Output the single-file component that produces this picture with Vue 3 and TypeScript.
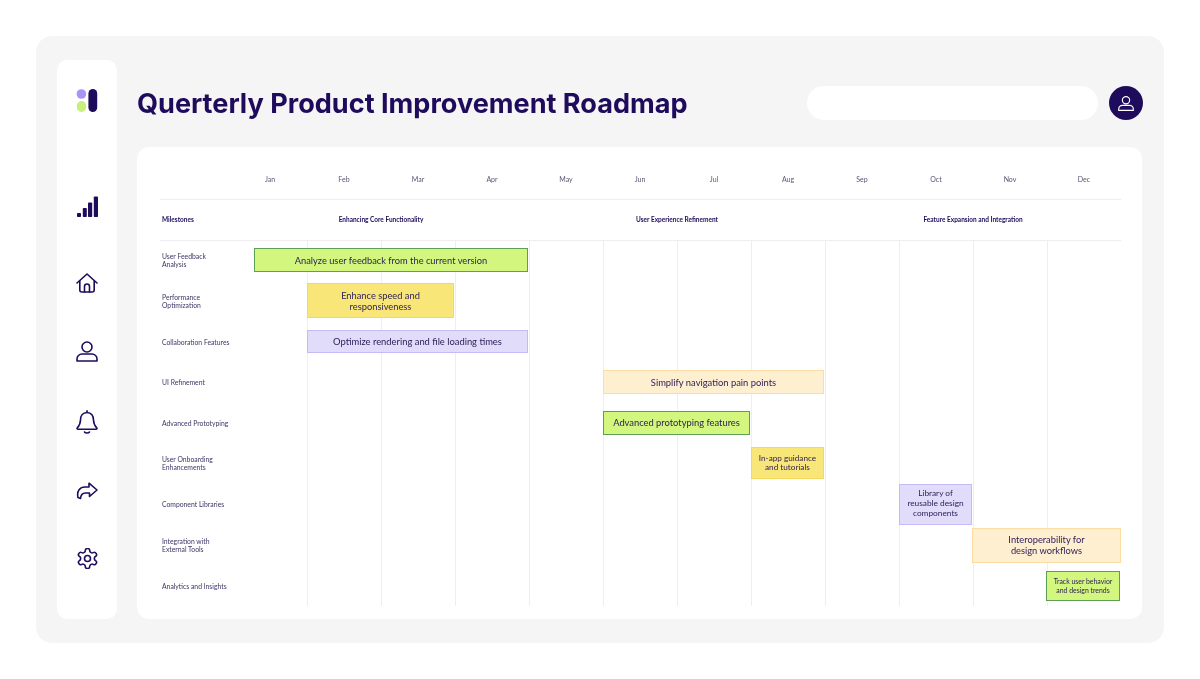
<script setup lang="ts">
interface Bar {
  text: string;
  start: number;
  span: number;
  row: number;
  tone: string;
  height: number;
  size: number;
  inset?: number;
  trim?: number;
}

const months = ['Jan', 'Feb', 'Mar', 'Apr', 'May', 'Jun', 'Jul', 'Aug', 'Sep', 'Oct', 'Nov', 'Dec'];

const phases = ['Enhancing Core Functionality', 'User Experience Refinement', 'Feature Expansion and Integration'];

const milestones = [
  'User Feedback\nAnalysis',
  'Performance\nOptimization',
  'Collaboration Features',
  'UI Refinement',
  'Advanced Prototyping',
  'User Onboarding\nEnhancements',
  'Component Libraries',
  'Integration with\nExternal Tools',
  'Analytics and Insights',
];

const bars: Bar[] = [
  { text: 'Analyze user feedback from the current version', start: 1, span: 4, row: 1, tone: 'green', height: 24, size: 9.3, inset: 21 },
  { text: 'Enhance speed and\nresponsiveness', start: 2, span: 2, row: 2, tone: 'yellow', height: 35, size: 9.3 },
  { text: 'Optimize rendering and file loading times', start: 2, span: 3, row: 3, tone: 'purple', height: 23, size: 9.4 },
  { text: 'Simplify navigation pain points', start: 6, span: 3, row: 4, tone: 'orange', height: 24, size: 9.4 },
  { text: 'Advanced prototyping features', start: 6, span: 2, row: 5, tone: 'green', height: 24, size: 9.35 },
  { text: 'In-app guidance\nand tutorials', start: 8, span: 1, row: 6, tone: 'yellow', height: 32, size: 8.2 },
  { text: 'Library of\nreusable design\ncomponents', start: 10, span: 1, row: 7, tone: 'purple', height: 41, size: 8.3 },
  { text: 'Interoperability for\ndesign workflows', start: 11, span: 2, row: 8, tone: 'orange', height: 35, size: 9.3, inset: -1, trim: 0 },
  { text: 'Track user behavior\nand design trends', start: 12, span: 1, row: 9, tone: 'green', height: 30, size: 6.9, inset: -1 },
];

function barStyle(bar: Bar) {
  return {
    gridColumn: `${bar.start + 1} / span ${bar.span}`,
    gridRow: bar.row,
    height: `${bar.height}px`,
    fontSize: `${bar.size}px`,
    marginLeft: bar.inset ? `${bar.inset}px` : undefined,
    marginRight: `${bar.trim ?? 1}px`,
  };
}
</script>

<template>
  <div class="shell">
    <aside class="sidebar">
      <svg class="logo" width="22" height="23" viewBox="0 0 22 23">
        <circle cx="5.4" cy="5" r="4.8" fill="#a795f5" />
        <rect x="0.8" y="12" width="9.4" height="11" rx="4.7" fill="#c8ee80" />
        <rect x="12.4" y="0" width="8.8" height="23" rx="4.4" fill="#1e0b5b" />
      </svg>

      <nav class="nav">
        <svg width="21" height="21" viewBox="0 0 21 21" fill="#1e0b5b">
          <rect x="0" y="17" width="4" height="4" rx="0.8" />
          <rect x="5.8" y="12" width="4" height="9" rx="0.8" />
          <rect x="11" y="6.5" width="4.2" height="14.5" rx="0.8" />
          <rect x="16.8" y="0.5" width="4.2" height="20.5" rx="0.8" />
        </svg>
        <svg class="home" width="22" height="20" viewBox="0 0 22 20">
          <path d="M1 10 L11 1 L21 10" />
          <path d="M3.8 8 V17 a2 2 0 0 0 2 2 H16.2 a2 2 0 0 0 2-2 V8" />
          <path d="M8.5 19 V13.5 a2.5 2.5 0 0 1 5 0 V19" />
        </svg>
        <svg width="22" height="21" viewBox="0 0 22 21">
          <circle cx="11" cy="6" r="5" />
          <path d="M1 20 v-2 a5 5 0 0 1 5-5 h10 a5 5 0 0 1 5 5 v2 z" />
        </svg>
        <svg width="22" height="24" viewBox="0 0 22 24">
          <path d="M11 0.8 V2.5" />
          <path d="M11 2.5 C6.5 2.5 4.5 6 4.5 10 C4.5 14 3 16 1.2 18 C0.8 18.6 1.2 19.2 2 19.2 H20 C20.8 19.2 21.2 18.6 20.8 18 C19 16 17.5 14 17.5 10 C17.5 6 15.5 2.5 11 2.5 Z" />
          <path d="M8.5 22 C9.5 23.3 12.5 23.3 13.5 22" />
        </svg>
        <svg width="22" height="18" viewBox="0 0 22 18">
          <path d="M13 1.2 L21 8 L13.5 14.5 V11 H9.5 C6.5 11 4.8 13 4.5 16.5 L2 15.5 C0.5 9 4 5 9 5 H13 Z" />
        </svg>
        <svg width="21" height="21" viewBox="2.5 1.5 19 21">
          <path d="M12.22 2h-.44a2 2 0 0 0-2 2v.18a2 2 0 0 1-1 1.73l-.43.25a2 2 0 0 1-2 0l-.15-.08a2 2 0 0 0-2.73.73l-.22.38a2 2 0 0 0 .73 2.73l.15.1a2 2 0 0 1 1 1.72v.51a2 2 0 0 1-1 1.74l-.15.09a2 2 0 0 0-.73 2.73l.22.38a2 2 0 0 0 2.73.73l.15-.08a2 2 0 0 1 2 0l.43.25a2 2 0 0 1 1 1.73V20a2 2 0 0 0 2 2h.44a2 2 0 0 0 2-2v-.18a2 2 0 0 1 1-1.73l.43-.25a2 2 0 0 1 2 0l.15.08a2 2 0 0 0 2.73-.73l.22-.39a2 2 0 0 0-.73-2.73l-.15-.08a2 2 0 0 1-1-1.74v-.5a2 2 0 0 1 1-1.74l.15-.09a2 2 0 0 0 .73-2.73l-.22-.38a2 2 0 0 0-2.73-.73l-.15.08a2 2 0 0 1-2 0l-.43-.25a2 2 0 0 1-1-1.73V4a2 2 0 0 0-2-2z" />
          <circle cx="12" cy="12" r="3" />
        </svg>
      </nav>
    </aside>

    <main class="main">
      <header class="topbar">
        <h1 class="title">Querterly Product Improvement Roadmap</h1>
        <div class="search"></div>
        <div class="avatar">
          <svg width="16" height="17" viewBox="0 0 22 21">
            <circle cx="11" cy="6" r="5" />
            <path d="M1 20 v-2 a5 5 0 0 1 5-5 h10 a5 5 0 0 1 5 5 v2 z" />
          </svg>
        </div>
      </header>

      <section class="card">
        <div class="months grid">
          <span></span>
          <span v-for="month in months" :key="month" class="month">{{ month }}</span>
        </div>

        <div class="phases grid">
          <span class="phase-label">Milestones</span>
          <span v-for="phase in phases" :key="phase" class="phase">{{ phase }}</span>
        </div>

        <div class="gantt grid">
          <div
            v-for="n in 11"
            :key="n"
            class="line"
            :style="{ gridColumn: n + 2 }"
          ></div>
          <div
            v-for="(label, i) in milestones"
            :key="label"
            class="label"
            :style="{ gridRow: i + 1 }"
          >{{ label }}</div>
          <div
            v-for="bar in bars"
            :key="bar.text"
            class="bar"
            :class="`bar--${bar.tone}`"
            :style="barStyle(bar)"
          >{{ bar.text }}</div>
        </div>
      </section>
    </main>
  </div>
</template>

<style>
body {
  background: #fff;
}
</style>

<style scoped>
.shell {
  display: flex;
  gap: 20px;
  width: 1128px;
  height: 607px;
  margin: 36px;
  padding: 24px 22px 24px 21px;
  box-sizing: border-box;
  background: #f5f5f6;
  border-radius: 16px;
  color: #1e0b5b;
  font-family: "Lato", "Noto Sans", sans-serif;
  will-change: transform;
}

.sidebar {
  flex: 0 0 60px;
  display: flex;
  flex-direction: column;
  align-items: center;
  padding-top: 29px;
  background: #fff;
  border-radius: 10px;
}

.nav {
  display: flex;
  flex-direction: column;
  align-items: center;
  gap: 48px;
  margin-top: 84px;
}

.nav svg,
.avatar svg {
  fill: none;
  stroke-linecap: round;
  stroke-linejoin: round;
}

.nav svg:first-child {
  fill: #1e0b5b;
}

.nav path,
.nav circle {
  stroke: #1e0b5b;
  stroke-width: 1.6;
}

.nav .home {
  margin-top: 8px;
}

.main {
  flex: 1;
  display: flex;
  flex-direction: column;
  min-width: 0;
}

.topbar {
  flex: 0 0 87px;
  display: flex;
  align-items: center;
  box-sizing: border-box;
  padding-bottom: 1px;
  margin-right: -1px;
}

.title {
  flex: 1;
  margin: 0;
  font-family: "Inter", sans-serif;
  font-size: 27.1px;
  font-weight: 700;
  white-space: nowrap;
}

.search {
  width: 291px;
  height: 34px;
  background: #fff;
  border-radius: 17px;
}

.avatar {
  display: flex;
  align-items: center;
  justify-content: center;
  width: 34px;
  height: 34px;
  margin-left: 11px;
  background: #1e0b5b;
  border-radius: 50%;
}

.avatar path,
.avatar circle {
  stroke: #fff;
  stroke-width: 1.6;
}

.card {
  flex: 1;
  padding: 0 21px 13px 23px;
  background: #fff;
  border-radius: 12px;
}

.grid {
  display: grid;
  grid-template-columns: 73px repeat(12, 74px);
}

.months {
  height: 53px;
  align-items: center;
  border-bottom: 1px solid #eeeef0;
  box-sizing: border-box;
  padding-top: 12px;
}

.month {
  text-align: center;
  font-size: 7px;
  color: #5a5474;
}

.phases {
  height: 41px;
  align-items: center;
  border-bottom: 1px solid #eeeef0;
  box-sizing: border-box;
  padding-bottom: 2px;
  font-size: 6.5px;
  font-weight: 700;
}

.phase-label {
  padding-left: 2px;
}

.phase {
  grid-column: span 4;
  text-align: center;
}

.gantt {
  grid-template-rows: repeat(9, 1fr);
  height: 366px;
  margin-top: -1px;
}

.line {
  grid-row: 1 / -1;
  border-left: 1px solid #eeeef0;
}

.label {
  grid-column: 1;
  align-self: center;
  padding-left: 2px;
  font-size: 6.8px;
  line-height: 8px;
  color: #3f3566;
  white-space: pre-line;
}

.bar {
  align-self: center;
  z-index: 1;
  display: flex;
  align-items: center;
  justify-content: center;
  box-sizing: border-box;
  border: 1px solid;
  line-height: 1.2;
  text-align: center;
  white-space: pre-line;
  color: #2a1c55;
}

.bar--green {
  background: #d2f67e;
  border-color: #5f9f55;
}

.bar--yellow {
  background: #f8e678;
  border-color: #f2d85e;
}

.bar--purple {
  background: #e2dcfb;
  border-color: #c6baf6;
}

.bar--orange {
  background: #feefd0;
  border-color: #fbdca2;
}
</style>
